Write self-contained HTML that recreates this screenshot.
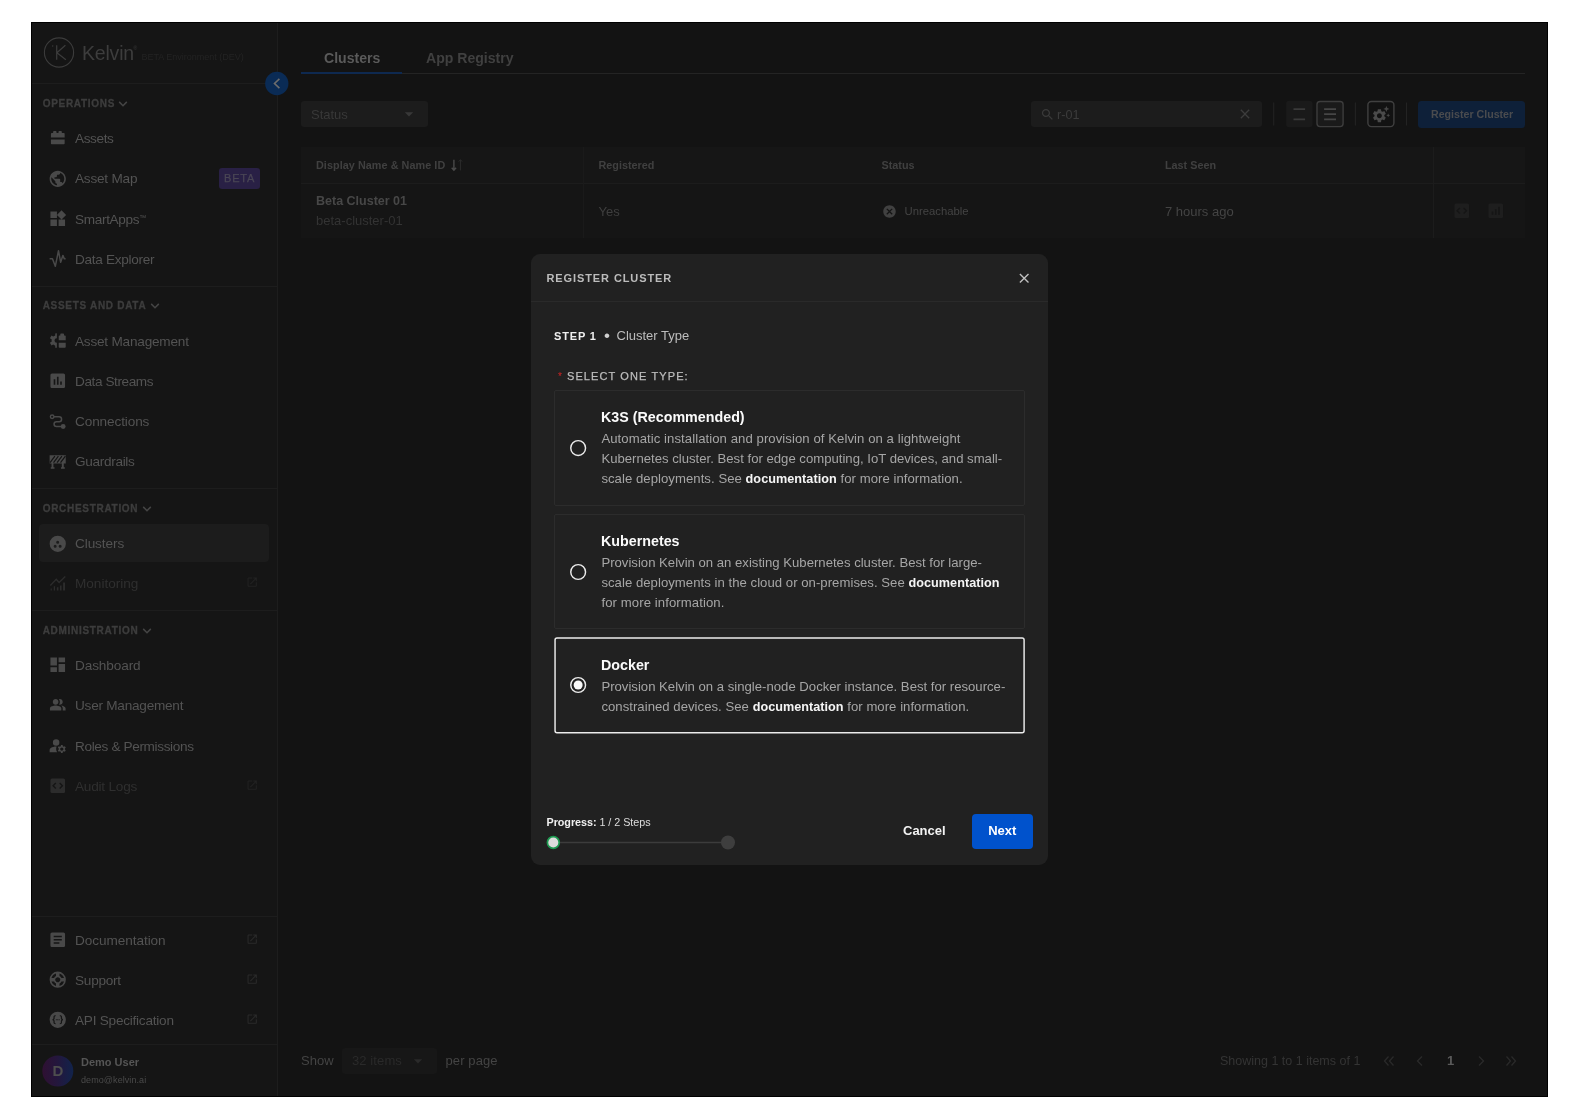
<!DOCTYPE html>
<html lang="en">
<head>
<meta charset="utf-8">
<title>Kelvin - Clusters</title>
<style>
*{box-sizing:border-box;margin:0;padding:0}
html,body{width:1580px;height:1120px;background:#fff;overflow:hidden}
body{font-family:"Liberation Sans",sans-serif;position:relative;color:#5c5c5c}
.abs{position:absolute}
#frame{position:absolute;left:31px;top:22px;width:1517px;height:1075px;border:1px solid #000;background:#131313;overflow:hidden}
/* everything inside #app is positioned in page coords via the offset wrapper */
#app{position:absolute;left:-32px;top:-23px;width:1580px;height:1120px;will-change:transform}
#sidebar{position:absolute;left:32px;top:23px;width:246px;height:1073px;background:#151515;border-right:1px solid #1d1d1d}
.hr{position:absolute;left:32px;width:245px;height:1px;background:#1d1d1d}
.sec{position:absolute;left:42.700px;height:12px;line-height:12px;font-size:10px;font-weight:bold;letter-spacing:.700px;color:#3d3d3d;-webkit-text-stroke:.300px #3d3d3d;white-space:nowrap}

.it{position:absolute;left:40px;width:229px;height:38px;border-radius:4px;white-space:nowrap}
.actbg{position:absolute;left:39px;top:524.300px;width:230px;height:37.900px;border-radius:4px;background:#1c1c1c}
.it .ic{position:absolute;left:8.250px;top:8.950px;width:19.500px;height:19.500px;fill:#494949;color:#494949}
.it .tx{position:absolute;left:35px;top:0;line-height:38px;font-size:13.600px;color:#535353;letter-spacing:-.22px}
.it.dim .tx{color:#2f2f2f}
.it.dim .ic{fill:#2c2c2c;color:#2c2c2c}
.it .ext{position:absolute;left:205.800px;top:11.600px;width:12.400px;height:12.400px;fill:#2a2a2a}
.it.dim .ext{fill:#222}
.th{position:absolute;top:158px;font-size:10.800px;line-height:14px;font-weight:bold;color:#404040;white-space:nowrap}
.card{position:absolute;left:554px;width:471px;border:1px solid #2c2c2c;border-radius:2px;background:#212121}
.card.sel{border:1.300px solid #e6e6e6;background:#212121;border-radius:2.500px}
.radio{position:absolute;left:570px;width:16.500px;height:16.500px;border-radius:50%;border:1.600px solid #f4f4f4}
.radio i{position:absolute;left:2.150px;top:2.150px;width:9px;height:9px;border-radius:50%;background:#fafafa}
.ct{position:absolute;left:600.800px;font-size:15px;line-height:18px;font-weight:bold;color:#fafafa;white-space:nowrap;transform:scaleX(.952);transform-origin:0 50%}
.cd{position:absolute;left:601.400px;font-size:13.150px;line-height:20.150px;color:#a6a6a6;white-space:nowrap}
.cd b{color:#f5f5f5;font-size:12.650px}
.tab{top:48.600px;font-size:15px;line-height:18px;font-weight:bold;white-space:nowrap;transform:scaleX(.938);transform-origin:0 50%}
</style>
</head>
<body>
<div id="frame"><div id="app">

<!-- ============ SIDEBAR ============ -->
<div id="sidebar"></div>

<!--SB_START-->
<svg width="0" height="0" style="position:absolute">
<defs>
<symbol id="i-chev" viewBox="0 0 24 24"><path d="M16.59 8.59L12 13.17 7.41 8.59 6 10l6 6 6-6z"/></symbol>
<symbol id="i-ext" viewBox="0 0 24 24"><path d="M19 19H5V5h7V3H5c-1.11 0-2 .9-2 2v14c0 1.1.89 2 2 2h14c1.1 0 2-.9 2-2v-7h-2v7zM14 3v2h3.59l-9.83 9.83 1.41 1.41L19 6.41V10h2V3h-7z"/></symbol>
<symbol id="i-assets" viewBox="0 0 24 24"><path d="M3.600 11.750V7.100c0-.55.450-1 1-1h1.700V4.600c0-.55.450-1 1-1h2.200c.55 0 1 .450 1 1v1.500h2.400V4.600c0-.55.450-1 1-1h2.100c.55 0 1 .450 1 1v1.500h2.500c.55 0 1 .450 1 1v4.650z M3.600 14.200h16.900v4.800c0 .55-.450 1-1 1H4.600c-.55 0-1-.450-1-1z"/></symbol>
<symbol id="i-globe" viewBox="0 0 24 24"><path d="M12 2C6.48 2 2 6.480 2 12s4.480 10 10 10 10-4.480 10-10S17.520 2 12 2zm-1 17.930c-3.950-.490-7-3.850-7-7.930 0-.620.080-1.210.210-1.790L9 15v1c0 1.100.9 2 2 2v1.930zm6.900-2.540c-.260-.810-1-1.390-1.900-1.390h-1v-3c0-.550-.450-1-1-1H8v-2h2c.550 0 1-.450 1-1V7h2c1.100 0 2-.9 2-2v-.410c2.930 1.190 5 4.060 5 7.410 0 2.080-.8 3.970-2.100 5.390z"/></symbol>
<symbol id="i-widgets" viewBox="0 0 24 24"><path d="M13 13v8h8v-8h-8zM3 21h8v-8H3v8zM3 3v8h8V3H3zm13.660-1.310L11 7.340 16.660 13l5.660-5.660-5.660-5.650z"/></symbol>
<symbol id="i-pulse" viewBox="0 0 24 24"><path fill="none" stroke="currentColor" stroke-width="1.850" stroke-linejoin="round" d="M2 12.100H5.500L9 21.350 12.900 2.150 15.600 16.400 18.300 7.900 20.100 12.100H21.700"/></symbol>
<symbol id="i-assetmgmt" viewBox="0 0 24 24"><path d="M10.90 2.70 L8.88 2.93 L8.97 5.39 L6.40 6.87 L4.32 5.56 L2.29 9.07 L4.47 10.22 L4.47 13.18 L2.29 14.33 L4.32 17.84 L6.40 16.53 L8.97 18.01 L8.88 20.47 L10.90 20.70 L10.90 14.60 A2.9 2.9 0 0 1 10.90 8.80 Z"/><path d="M13.200 11.500V6.300c0-.5.400-.9.900-.9h1V3.900c0-.5.400-.9.900-.9h2.800c.5 0 .9.400.9.900v1.500h1.200c.5 0 .9.400.9.900v5.200z M13.200 14.600h8.600v5.200c0 .5-.400.9-.9.900h-6.800c-.5 0-.9-.400-.9-.9z"/></symbol>
<symbol id="i-chart2" viewBox="0 0 24 24"><path d="M19 3H5c-1.100 0-2 .9-2 2v14c0 1.100.9 2 2 2h14c1.100 0 2-.9 2-2V5c0-1.100-.9-2-2-2zM9 17H7v-4h2v4zm4 0h-2v-7h2v7zm4 0h-2V7h2v10z"/></symbol>
<symbol id="i-chart" viewBox="0 0 24 24"><path d="M19 3H5c-1.100 0-2 .9-2 2v14c0 1.100.9 2 2 2h14c1.100 0 2-.9 2-2V5c0-1.100-.9-2-2-2zM9 17H7v-7h2v7zm4 0h-2V7h2v10zm4 0h-2v-4h2v4z"/></symbol>
<symbol id="i-conn" viewBox="0 0 24 24"><path fill="none" stroke="currentColor" stroke-width="1.850" d="M7.400 5.850H13.700a3 3 0 0 1 0 6H10.450a3 3 0 0 0 0 6H17"/><circle cx="5.100" cy="5.850" r="2.200" fill="none" stroke="currentColor" stroke-width="1.700"/><circle cx="18.650" cy="17.800" r="3" fill="currentColor"/></symbol>
<symbol id="i-guard" viewBox="0 0 24 24"><path d="M2 4h19.850v10H2zM4.400 14h2.300v4.700h1.300v1.800H3.400v-1.800h1zM17 14h2.400v4.700h1.300v1.800H16v-1.800h1z"/><path d="M2.500 13l6-8M6.800 13l6-8M11.100 13l6-8M15.400 13l6-8" stroke="#151515" stroke-width="1.500" fill="none"/></symbol>
<symbol id="i-cluster" viewBox="0 0 24 24"><path fill-rule="evenodd" d="M12 2a10 10 0 1 0 0 20 10 10 0 0 0 0-20zm-.1 6.300a1.850 1.850 0 1 1 0 3.700 1.850 1.850 0 0 1 0-3.700zM8.800 13.350a1.850 1.850 0 1 1 0 3.700 1.850 1.850 0 0 1 0-3.700zm6.150 0a1.850 1.850 0 1 1 0 3.700 1.850 1.850 0 0 1 0-3.700z"/></symbol>
<symbol id="i-monitor" viewBox="0 0 24 24"><path d="M3.200 17.700h1.400v2.700H3.200zM7.100 15h1.600v5.400H7.100zM10.900 16.200h1.950v4.200H10.900zM14.800 14.200h1.900v6.200h-1.900zM18.600 10.400h2.300v10h-2.300z"/><path fill="none" stroke="currentColor" stroke-width="1.600" d="M2.850 14.200l7.300-7.700 3.450 3.900L21.300 3"/></symbol>
<symbol id="i-dash" viewBox="0 0 24 24"><path d="M3 13h8V3H3v10zm0 8h8v-6H3v6zm10 0h8V11h-8v10zm0-18v6h8V3h-8z"/></symbol>
<symbol id="i-people" viewBox="0 0 24 24"><g transform="translate(1.500 1.500) scale(.875)"><path d="M16.670 13.130C18.040 14.060 19 15.320 19 17v3h4v-3c0-2.180-3.570-3.470-6.330-3.870zM15 12c2.210 0 4-1.790 4-4s-1.790-4-4-4c-.470 0-.910.100-1.330.240C14.500 5.270 15 6.580 15 8s-.5 2.730-1.330 3.760c.420.140.860.240 1.330.240zM9 12c2.210 0 4-1.790 4-4s-1.790-4-4-4-4 1.790-4 4 1.790 4 4 4zM9 13c-2.670 0-8 1.340-8 4v3h16v-3c0-2.660-5.330-4-8-4z"/></g></symbol>
<symbol id="i-roles" viewBox="0 0 24 24"><path d="M10 4a4 4 0 1 0 0 8 4 4 0 0 0 0-8zM10.670 13.020c-.220-.010-.440-.020-.670-.020-2.420 0-4.680.670-6.610 1.820-.880.520-1.390 1.500-1.390 2.530V20h9.260c-.790-1.130-1.260-2.510-1.260-4 0-1.070.250-2.070.670-2.980z"/><path d="M20.750 16c0-.220-.030-.420-.060-.630l1.140-1.010-1-1.730-1.450.490c-.320-.270-.680-.480-1.080-.630L18 11h-2l-.3 1.490c-.4.150-.760.360-1.080.630l-1.450-.490-1 1.730 1.140 1.010c-.030.210-.060.410-.060.630s.030.420.060.630l-1.140 1.010 1 1.730 1.450-.490c.320.270.680.480 1.080.630L16 21h2l.3-1.490c.4-.150.760-.360 1.080-.630l1.450.490 1-1.730-1.140-1.010c.030-.210.060-.410.060-.630zM17 18c-1.100 0-2-.9-2-2s.9-2 2-2 2 .9 2 2-.9 2-2 2z"/></symbol>
<symbol id="i-code" viewBox="0 0 24 24"><path fill-rule="evenodd" d="M5 3h14a2 2 0 0 1 2 2v14a2 2 0 0 1-2 2H5a2 2 0 0 1-2-2V5a2 2 0 0 1 2-2zm5.200 6.300L9 8.100 5.100 12 9 15.900l1.200-1.200L7.500 12l2.700-2.700zm3.600 0l2.700 2.700-2.700 2.700 1.200 1.200 3.900-3.900L15 8.100l-1.200 1.200z"/></symbol>
<symbol id="i-doc" viewBox="0 0 24 24"><path d="M19 3H5c-1.100 0-2 .9-2 2v14c0 1.100.9 2 2 2h14c1.100 0 2-.9 2-2V5c0-1.100-.9-2-2-2zm-5 14H7v-2h7v2zm3-4H7v-2h10v2zm0-4H7V7h10v2z"/></symbol>
<symbol id="i-support" viewBox="0 0 24 24"><g transform="rotate(45 12 12)"><path fill-rule="evenodd" d="M12 2a10 10 0 1 0 0 20 10 10 0 0 0 0-20zm0 2c1.400 0 2.800.4 3.900 1l-2.200 2.300a4.900 4.900 0 0 0-3.400 0L8.100 5c1.100-.6 2.500-1 3.900-1zM5 8.100l2.300 2.200a4.900 4.900 0 0 0 0 3.400L5 15.900A7.900 7.900 0 0 1 5 8.100zM12 20c-1.400 0-2.800-.4-3.900-1l2.200-2.300c1.100.4 2.300.4 3.400 0l2.200 2.300c-1.100.6-2.500 1-3.900 1zm0-5a3 3 0 1 1 0-6 3 3 0 0 1 0 6zm7-6.900a7.900 7.900 0 0 1 0 7.800l-2.300-2.200c.4-1.100.4-2.300 0-3.400L19 8.100z"/></g></symbol>
<symbol id="i-api" viewBox="0 0 24 24"><path fill-rule="evenodd" d="M12 2a10 10 0 1 0 0 20 10 10 0 0 0 0-20zM9.500 6.500v1.300c-1 0-1.300.4-1.300 1.200v1.500c0 .8-.4 1.300-1 1.500.6.200 1 .7 1 1.500V15c0 .8.300 1.200 1.300 1.200v1.300c-2 0-2.800-.8-2.800-2.400v-1.400c0-.7-.4-1-1.200-1v-1.400c.8 0 1.200-.3 1.200-1V8.900c0-1.600.8-2.400 2.800-2.400zm5 0c2 0 2.800.8 2.800 2.400v1.400c0 .7.4 1 1.200 1v1.400c-.8 0-1.200.3-1.200 1v1.400c0 1.600-.8 2.400-2.800 2.400v-1.300c1 0 1.300-.4 1.300-1.200v-1.500c0-.8.4-1.300 1-1.500-.6-.2-1-.7-1-1.500V9c0-.8-.3-1.200-1.300-1.200V6.500zM9.600 11.300h1.200v1.400H9.600zm1.800 0h1.200v1.400h-1.200zm1.800 0h1.200v1.400h-1.200z"/></symbol>
</defs>
</svg>

<!-- logo -->
<svg class="abs" style="left:43px;top:36px" width="32" height="32" viewBox="0 0 32 32"><circle cx="16" cy="16.500" r="14.600" fill="none" stroke="#3c3c3c" stroke-width="1.100"/><path d="M13.700 9.300v14.500M22.400 9.300l-8.500 7.500 9 7" fill="none" stroke="#3c3c3c" stroke-width="1.250"/><circle cx="9.700" cy="10" r=".7" fill="#3c3c3c"/></svg>
<div class="abs" style="left:82px;top:41px;font-size:19.500px;line-height:24px;color:#3d3d3d;letter-spacing:-.2px">Kelvin</div>
<div class="abs" style="left:133.500px;top:44.500px;font-size:5px;line-height:6px;color:#3a3a3a">&reg;</div>
<div class="abs" style="left:141.500px;top:52px;font-size:9px;line-height:11px;color:#232323;white-space:nowrap">BETA Environment (DEV)</div>
<div class="hr" style="top:83px"></div>
<svg class="abs" style="left:263px;top:70px" width="28" height="28" viewBox="263 70 28 28"><circle cx="276.800" cy="83.500" r="11.650" fill="#0a2b55"/><path d="M279.400 78.900L274.500 83.500l4.900 4.600" fill="none" stroke="#6c6c6c" stroke-width="1.600"/></svg>

<div class="sec" style="top:97.700px">OPERATIONS<svg style="position:static;display:inline-block;vertical-align:top;margin-left:3.400px;margin-top:2.700px" width="10" height="8" viewBox="0 0 10 8"><path d="M1.200 1.900L5 5.700l3.800-3.800" fill="none" stroke="#454545" stroke-width="1.500"/></svg></div>
<div class="it" style="top:119.7px"><svg class="ic" style="top:8.75px"><use href="#i-assets"/></svg><span class="tx" style="letter-spacing:-0.387px">Assets</span></div>
<div class="it" style="top:159.7px"><svg class="ic" style="top:8.95px"><use href="#i-globe"/></svg><span class="tx" style="letter-spacing:-0.220px">Asset Map</span><span class="abs" style="left:179px;top:8.500px;width:40.500px;height:21px;border-radius:3px;background:#292045;color:#4a4655;-webkit-text-stroke:.250px #4a4655;font-size:11px;line-height:21px;text-align:center;letter-spacing:.850px;padding-left:.800px">BETA</span></div>
<div class="it" style="top:200.7px"><svg class="ic" style="top:8.25px"><use href="#i-widgets"/></svg><span class="tx" style="letter-spacing:-0.331px">SmartApps<span style="font-size:7px;position:relative;top:-4px">&trade;</span></span></div>
<div class="it" style="top:240.7px"><svg class="ic" style="top:8.75px"><use href="#i-pulse"/></svg><span class="tx" style="letter-spacing:-0.297px">Data Explorer</span></div>
<div class="hr" style="top:286px"></div>

<div class="sec" style="top:299.700px">ASSETS AND DATA<svg style="position:static;display:inline-block;vertical-align:top;margin-left:3.400px;margin-top:2.700px" width="10" height="8" viewBox="0 0 10 8"><path d="M1.200 1.900L5 5.700l3.800-3.800" fill="none" stroke="#454545" stroke-width="1.500"/></svg></div>
<div class="it" style="top:322.7px"><svg class="ic" style="top:8.35px"><use href="#i-assetmgmt"/></svg><span class="tx" style="letter-spacing:-0.214px">Asset Management</span></div>
<div class="it" style="top:362.7px"><svg class="ic" style="top:8.65px"><use href="#i-chart"/></svg><span class="tx" style="letter-spacing:-0.412px">Data Streams</span></div>
<div class="it" style="top:402.7px"><svg class="ic" style="top:8.85px"><use href="#i-conn"/></svg><span class="tx" style="letter-spacing:-0.120px">Connections</span></div>
<div class="it" style="top:442.7px"><svg class="ic" style="top:9.15px"><use href="#i-guard"/></svg><span class="tx" style="letter-spacing:-0.320px">Guardrails</span></div>
<div class="hr" style="top:488px"></div>

<div class="sec" style="top:502.700px">ORCHESTRATION<svg style="position:static;display:inline-block;vertical-align:top;margin-left:3.400px;margin-top:2.700px" width="10" height="8" viewBox="0 0 10 8"><path d="M1.200 1.900L5 5.700l3.800-3.800" fill="none" stroke="#454545" stroke-width="1.500"/></svg></div>
<div class="actbg"></div>
<div class="it act" style="top:524.7px"><svg class="ic" style="top:9.45px"><use href="#i-cluster"/></svg><span class="tx" style="letter-spacing:-0.095px">Clusters</span></div>
<div class="it dim" style="top:564.7px"><svg class="ic" style="top:9.25px"><use href="#i-monitor"/></svg><span class="tx" style="letter-spacing:-0.020px">Monitoring</span><svg class="ext"><use href="#i-ext"/></svg></div>
<div class="hr" style="top:610px"></div>

<div class="sec" style="top:624.700px">ADMINISTRATION<svg style="position:static;display:inline-block;vertical-align:top;margin-left:3.400px;margin-top:2.700px" width="10" height="8" viewBox="0 0 10 8"><path d="M1.200 1.900L5 5.700l3.800-3.800" fill="none" stroke="#454545" stroke-width="1.500"/></svg></div>
<div class="it" style="top:646.7px"><svg class="ic" style="top:8.65px"><use href="#i-dash"/></svg><span class="tx" style="letter-spacing:-0.109px">Dashboard</span></div>
<div class="it" style="top:686.7px"><svg class="ic" style="top:8.05px"><use href="#i-people"/></svg><span class="tx" style="letter-spacing:-0.240px">User Management</span></div>
<div class="it" style="top:727.7px"><svg class="ic" style="top:8.55px"><use href="#i-roles"/></svg><span class="tx" style="letter-spacing:-0.357px">Roles &amp; Permissions</span></div>
<div class="it dim" style="top:767.7px"><svg class="ic" style="top:8.55px"><use href="#i-code"/></svg><span class="tx" style="letter-spacing:-0.210px">Audit Logs</span><svg class="ext"><use href="#i-ext"/></svg></div>

<div class="hr" style="top:916px"></div>
<div class="it" style="top:921.7px"><svg class="ic" style="top:8.25px"><use href="#i-doc"/></svg><span class="tx" style="letter-spacing:-0.066px">Documentation</span><svg class="ext"><use href="#i-ext"/></svg></div>
<div class="it" style="top:961.7px"><svg class="ic" style="top:8.55px"><use href="#i-support"/></svg><span class="tx" style="letter-spacing:-0.249px">Support</span><svg class="ext"><use href="#i-ext"/></svg></div>
<div class="it" style="top:1001.7px"><svg class="ic" style="top:8.75px"><use href="#i-api"/></svg><span class="tx" style="letter-spacing:-0.238px">API Specification</span><svg class="ext"><use href="#i-ext"/></svg></div>
<div class="hr" style="top:1044px"></div>
<svg class="abs" style="left:40px;top:1053px" width="36" height="36" viewBox="40 1053 36 36"><defs><linearGradient id="avg" x1="0" y1="0" x2="1" y2="0"><stop offset="0" stop-color="#2f1032"/><stop offset=".5" stop-color="#23173d"/><stop offset="1" stop-color="#11234b"/></linearGradient></defs><circle cx="57.800" cy="1071" r="15.500" fill="url(#avg)"/></svg><div class="abs" style="left:42px;top:1055px;width:31.600px;height:32px;color:#4e4e4e;font-weight:bold;font-size:15px;line-height:32px;text-align:center">D</div>
<div class="abs" style="left:81px;top:1055px;font-size:11px;line-height:14px;font-weight:bold;color:#555;white-space:nowrap">Demo User</div>
<div class="abs" style="left:81px;top:1074.700px;font-size:9px;line-height:11px;color:#4a4a4a;white-space:nowrap;letter-spacing:.08px">demo@kelvin.ai</div>

<!--SB_END-->

<!--MAIN_START-->
<!-- tabs -->
<div class="abs" style="left:301px;top:73px;width:1224px;height:1px;background:#242424"></div>
<div class="abs" style="left:301px;top:72px;width:100.500px;height:2px;background:#0e2950"></div>
<div class="abs tab" style="left:323.800px;color:#5a5a5a">Clusters</div>
<div class="abs tab" style="left:426px;color:#404040">App Registry</div>

<!-- toolbar -->
<div class="abs" style="left:301px;top:100.800px;width:126.500px;height:26.500px;border-radius:3px;background:#1c1c1c"></div>
<div class="abs" style="left:311px;top:106.800px;font-size:13px;line-height:16px;color:#383838">Status</div>
<svg class="abs" style="left:399.200px;top:103.800px;fill:#383838" width="20" height="20" viewBox="0 0 24 24"><path d="M7 10l5 5 5-5z"/></svg>

<div class="abs" style="left:1031.300px;top:100.800px;width:230.700px;height:26.500px;border-radius:3px;background:#1c1c1c"></div>
<svg class="abs" style="left:1040px;top:106.500px;fill:#3a3a3a" width="15" height="15" viewBox="0 0 24 24"><path d="M15.500 14h-.790l-.280-.270C15.410 12.590 16 11.110 16 9.500 16 5.910 13.090 3 9.500 3S3 5.910 3 9.500 5.910 16 9.500 16c1.610 0 3.090-.590 4.230-1.570l.270.280v.790l5 4.990L20.490 19l-4.990-5zm-6 0C7.010 14 5 11.990 5 9.500S7.010 5 9.500 5 14 7.010 14 9.500 11.990 14 9.500 14z"/></svg>
<div class="abs" style="left:1057px;top:106.700px;font-size:12.600px;line-height:16px;color:#3c3c3c">r-01</div>
<svg class="abs" style="left:1236.700px;top:106.200px;fill:#3c3c3c" width="16" height="16" viewBox="0 0 24 24"><path d="M19 6.410L17.590 5 12 10.590 6.410 5 5 6.410 10.590 12 5 17.590 6.410 19 12 13.410 17.590 19 19 17.590 13.410 12z"/></svg>
<svg class="abs" style="left:1265px;top:95px" width="150" height="38" viewBox="1265 95 150 38">
<path d="M1273.700 102.500V125.500M1355.400 102.500V125.500M1406.500 102.500V125.500" stroke="#232323" stroke-width="1.100"/>
<rect x="1286.100" y="100.800" width="26.400" height="26.500" rx="3" fill="#1a1a1a"/>
<path d="M1293.500 109.100H1305.100M1293.500 119.350H1305.100" stroke="#3a3a3a" stroke-width="1.700"/>
<rect x="1317" y="101.500" width="26.100" height="25.100" rx="3" fill="#1a1a1a" stroke="#3d3d3d" stroke-width="1.400"/>
<path d="M1324.100 109.100H1336M1324.100 114.200H1336M1324.100 119.300H1336" stroke="#464646" stroke-width="1.700"/>
<rect x="1367.900" y="101.500" width="26" height="25.100" rx="3.500" fill="#121212" stroke="#404040" stroke-width="1.400"/>
<g transform="translate(1371.200 107.500) scale(.683)" fill="#4a4a4a"><path d="M19.140 12.940c.040-.3.060-.610.060-.940 0-.320-.020-.640-.070-.940l2.030-1.580c.180-.140.230-.410.120-.610l-1.920-3.320c-.120-.220-.370-.290-.590-.220l-2.390.960c-.5-.380-1.030-.7-1.620-.940l-.360-2.540c-.040-.240-.240-.410-.480-.410h-3.840c-.240 0-.430.170-.470.410l-.360 2.540c-.590.240-1.130.570-1.620.940l-2.390-.960c-.220-.080-.470 0-.590.220L2.740 8.870c-.120.210-.080.470.120.610l2.030 1.580c-.050.3-.090.630-.090.940s.020.640.070.940l-2.030 1.580c-.180.140-.230.410-.120.610l1.920 3.320c.120.220.370.290.590.220l2.390-.960c.5.380 1.030.7 1.620.940l.360 2.540c.050.240.240.410.480.410h3.840c.240 0 .440-.170.470-.410l.360-2.540c.590-.240 1.130-.560 1.620-.940l2.390.960c.220.080.470 0 .590-.220l1.920-3.320c.120-.220.070-.470-.120-.610l-2.010-1.580zM12 15.600c-1.980 0-3.600-1.620-3.600-3.600s1.620-3.600 3.600-3.600 3.600 1.620 3.600 3.600-1.620 3.600-3.600 3.600z"/></g>
<path fill="#464646" d="M1386.400 105.900l.9 2.100 2.100.9-2.100.9-.9 2.100-.9-2.100-2.100-.9 2.100-.9zM1388.200 113.400l.6 1.300 1.300.6-1.300.6-.6 1.300-.6-1.300-1.300-.6 1.300-.6z"/>
</svg>
<div class="abs" style="left:1418.300px;top:100.700px;width:106.600px;height:27px;border-radius:3.500px;background:#0e2039"></div><div class="abs" style="left:1430.600px;top:106.300px;font-size:11.500px;line-height:16px;font-weight:bold;color:#4a4b4e;white-space:nowrap;transform:scaleX(.925);transform-origin:0 50%">Register Cluster</div>

<!-- table -->
<div class="abs" style="left:301px;top:147px;width:1224px;height:37px;background:#161616;border-bottom:1px solid #1c1c1c"></div>
<div class="abs" style="left:301px;top:184px;width:1224px;height:53.700px;background:#151515"></div>
<div class="abs" style="left:582.500px;top:147px;width:1px;height:90.700px;background:#1a1a1a"></div>
<div class="abs" style="left:1433px;top:147px;width:1px;height:90.700px;background:#1c1c1c"></div>
<div class="th" style="left:316px;letter-spacing:.065px">Display Name &amp; Name ID</div>
<svg class="abs" style="left:449px;top:159px" width="16" height="14" viewBox="0 0 16 14"><path d="M4.900 .8v10.300M2.700 8.800l2.200 2.400 2.200-2.400" fill="none" stroke="#4a4a4a" stroke-width="1.400"/><path d="M11.400 11.400V.700M9.700 2.600l1.700-1.900 1.700 1.900" fill="none" stroke="#2c2c2c" stroke-width="1"/></svg>
<div class="th" style="left:598.500px">Registered</div>
<div class="th" style="left:881.500px">Status</div>
<div class="th" style="left:1165px">Last Seen</div>
<div class="abs" style="left:316px;top:193px;font-size:12.500px;line-height:16px;font-weight:bold;color:#474747;white-space:nowrap">Beta Cluster 01</div>
<div class="abs" style="left:316px;top:213px;font-size:13px;line-height:16px;color:#333;white-space:nowrap">beta-cluster-01</div>
<div class="abs" style="left:598.500px;top:204px;font-size:13px;line-height:16px;color:#3e3e3e">Yes</div>
<svg class="abs" style="left:882px;top:203.500px;fill:#414141" width="15" height="15" viewBox="0 0 24 24"><path d="M12 2C6.470 2 2 6.470 2 12s4.470 10 10 10 10-4.470 10-10S17.530 2 12 2zm5 13.590L15.590 17 12 13.410 8.410 17 7 15.590 10.590 12 7 8.410 8.410 7 12 10.590 15.590 7 17 8.410 13.410 12 17 15.590z"/></svg>
<div class="abs" style="left:904.500px;top:204px;font-size:11.300px;line-height:14px;color:#444;white-space:nowrap">Unreachable</div>
<div class="abs" style="left:1165px;top:204px;font-size:13px;line-height:16px;color:#444;white-space:nowrap">7 hours ago</div>
<svg class="abs" style="left:1451.850px;top:201.250px;fill:#1e1e1e" width="19.500" height="19.500" viewBox="0 0 24 24"><use href="#i-code"/></svg>
<svg class="abs" style="left:1486.250px;top:201.250px;fill:#1e1e1e" width="19.500" height="19.500" viewBox="0 0 24 24"><use href="#i-chart2"/></svg>

<!-- footer -->
<div class="abs" style="left:301px;top:1053px;font-size:13px;line-height:16px;color:#444">Show</div>
<div class="abs" style="left:341.500px;top:1047.500px;width:95px;height:26px;border-radius:3px;background:#171717"></div>
<div class="abs" style="left:352px;top:1053px;font-size:13px;line-height:16px;color:#2a2a2a;white-space:nowrap;letter-spacing:.1px">32 items</div>
<svg class="abs" style="left:408.400px;top:1050.600px;fill:#2a2a2a" width="20" height="20" viewBox="0 0 24 24"><path d="M7 10l5 5 5-5z"/></svg>
<div class="abs" style="left:445.500px;top:1053px;font-size:13px;line-height:16px;color:#444;white-space:nowrap;letter-spacing:.1px">per page</div>
<div class="abs" style="left:1220px;top:1053px;font-size:12.500px;line-height:16px;color:#343434;white-space:nowrap">Showing 1 to 1 items of 1</div>
<svg class="abs" style="left:1383px;top:1055px" width="12" height="12" viewBox="0 0 12 12"><path d="M5.500 1.500L1.500 6l4 4.500M10.500 1.500L6.500 6l4 4.500" fill="none" stroke="#2a2a2a" stroke-width="1.300"/></svg>
<svg class="abs" style="left:1414px;top:1055px" width="12" height="12" viewBox="0 0 12 12"><path d="M8 1.500L3.500 6 8 10.500" fill="none" stroke="#2a2a2a" stroke-width="1.300"/></svg>
<div class="abs" style="left:1440px;top:1053px;width:21px;text-align:center;font-size:13px;line-height:16px;font-weight:bold;color:#5a5a5a">1</div>
<svg class="abs" style="left:1475px;top:1055px" width="12" height="12" viewBox="0 0 12 12"><path d="M4 1.500L8.500 6 4 10.500" fill="none" stroke="#2a2a2a" stroke-width="1.300"/></svg>
<svg class="abs" style="left:1505px;top:1055px" width="12" height="12" viewBox="0 0 12 12"><path d="M1.500 1.500L5.500 6l-4 4.500M6.500 1.500L10.500 6l-4 4.500" fill="none" stroke="#2a2a2a" stroke-width="1.300"/></svg>

<!--MAIN_END-->

<!--MODAL_START-->
<div class="abs" id="modal" style="left:531px;top:254px;width:517px;height:611px;border-radius:9px;background:#212121"></div>
<div class="abs" style="left:546.500px;top:271px;font-size:11px;line-height:14px;letter-spacing:.9px;color:#bcbcbc;white-space:nowrap;font-weight:bold">REGISTER CLUSTER</div>
<svg class="abs" style="left:1015.900px;top:270.100px;fill:#c0c0c0" width="16.400" height="16.400" viewBox="0 0 24 24"><path d="M19 6.410L17.590 5 12 10.590 6.410 5 5 6.410 10.590 12 5 17.590 6.410 19 12 13.410 17.590 19 19 17.590 13.410 12z"/></svg>
<div class="abs" style="left:531px;top:301px;width:517px;height:1px;background:#2a2a2a"></div>

<div class="abs" style="left:554px;top:329px;font-size:11px;line-height:14px;font-weight:bold;letter-spacing:.85px;color:#f0f0f0;white-space:nowrap">STEP 1</div>
<div class="abs" style="left:603.900px;top:326.600px;font-size:17px;line-height:18px;color:#d0d0d0;white-space:nowrap">&bull;</div>
<div class="abs" style="left:616.500px;top:327.700px;font-size:13px;line-height:16px;color:#bdbdbd;white-space:nowrap">Cluster Type</div>
<div class="abs" style="left:558px;top:371px;font-size:10px;line-height:12px;color:#d32222">*</div>
<div class="abs" style="left:567px;top:369px;font-size:11px;line-height:14px;letter-spacing:1.100px;color:#bdbdbd;-webkit-text-stroke:.250px #bdbdbd;white-space:nowrap">SELECT ONE TYPE:</div>

<!-- card 1 -->
<div class="card" style="top:390px;height:115.500px"></div>
<svg class="abs" style="left:566px;top:436.0px" width="24" height="24" viewBox="566 436.0 24 24"><circle cx="578.150" cy="448.0" r="7.400" fill="none" stroke="#ececec" stroke-width="1.450"/></svg>
<div class="ct" style="top:408px">K3S (Recommended)</div>
<div class="cd" style="top:428.500px"><span style="letter-spacing:0.065px">Automatic installation and provision of Kelvin on a lightweight</span><br>Kubernetes cluster. Best for edge computing, IoT devices, and small-<br><span style="letter-spacing:0.045px">scale deployments. See <b>documentation</b> for more information.</span></div>

<!-- card 2 -->
<div class="card" style="top:513.500px;height:115.500px"></div>
<svg class="abs" style="left:566px;top:560.1px" width="24" height="24" viewBox="566 560.1 24 24"><circle cx="578.150" cy="572.1" r="7.400" fill="none" stroke="#ececec" stroke-width="1.450"/></svg>
<div class="ct" style="top:532px">Kubernetes</div>
<div class="cd" style="top:552.700px">Provision Kelvin on an existing Kubernetes cluster. Best for large-<br><span style="letter-spacing:0.035px">scale deployments in the cloud or on-premises. See <b>documentation</b></span><br><span style="letter-spacing:0.09px">for more information.</span></div>

<!-- card 3 (selected) -->
<svg class="abs" style="left:550px;top:634px" width="480" height="104" viewBox="550 634 480 104"><rect x="555.050" y="638" width="469.050" height="94.700" rx="2" fill="#212121" stroke="#ececec" stroke-width="1.450"/></svg>
<svg class="abs" style="left:566px;top:673.0px" width="24" height="24" viewBox="566 673.0 24 24"><circle cx="578.150" cy="685.0" r="7.400" fill="none" stroke="#ececec" stroke-width="1.450"/><circle cx="578.150" cy="685.0" r="4.500" fill="#fafafa"/></svg>
<div class="ct" style="top:656px">Docker</div>
<div class="cd" style="top:676.700px">Provision Kelvin on a single-node Docker instance. Best for resource-<br><span style="letter-spacing:0.03px">constrained devices. See <b>documentation</b> for more information.</span></div>

<!-- footer -->
<div class="abs" style="left:546.500px;top:815.200px;font-size:10.800px;line-height:14px;color:#dcdcdc;white-space:nowrap;letter-spacing:-.05px"><b style="color:#f0f0f0">Progress:</b> 1 / 2 Steps</div>
<svg class="abs" style="left:540px;top:830px" width="204" height="26" viewBox="540 830 204 26"><path d="M553 842.500H728" stroke="#3c3c3c" stroke-width="1.600"/><circle cx="553.300" cy="842.500" r="5.900" fill="#dcdcdc" stroke="#1c9a50" stroke-width="1.700"/><circle cx="728" cy="842.500" r="7" fill="#3e3e3e"/></svg>
<div class="abs" style="left:903px;top:822.500px;font-size:13px;line-height:16px;font-weight:bold;color:#f2f2f2;white-space:nowrap">Cancel</div>
<div class="abs" style="left:972px;top:813.500px;width:60.500px;height:35px;border-radius:4px;background:#0052cc;color:#fff;font-size:13px;font-weight:bold;line-height:33.500px;text-align:center">Next</div>

<!--MODAL_END-->

</div></div>
</body>
</html>
